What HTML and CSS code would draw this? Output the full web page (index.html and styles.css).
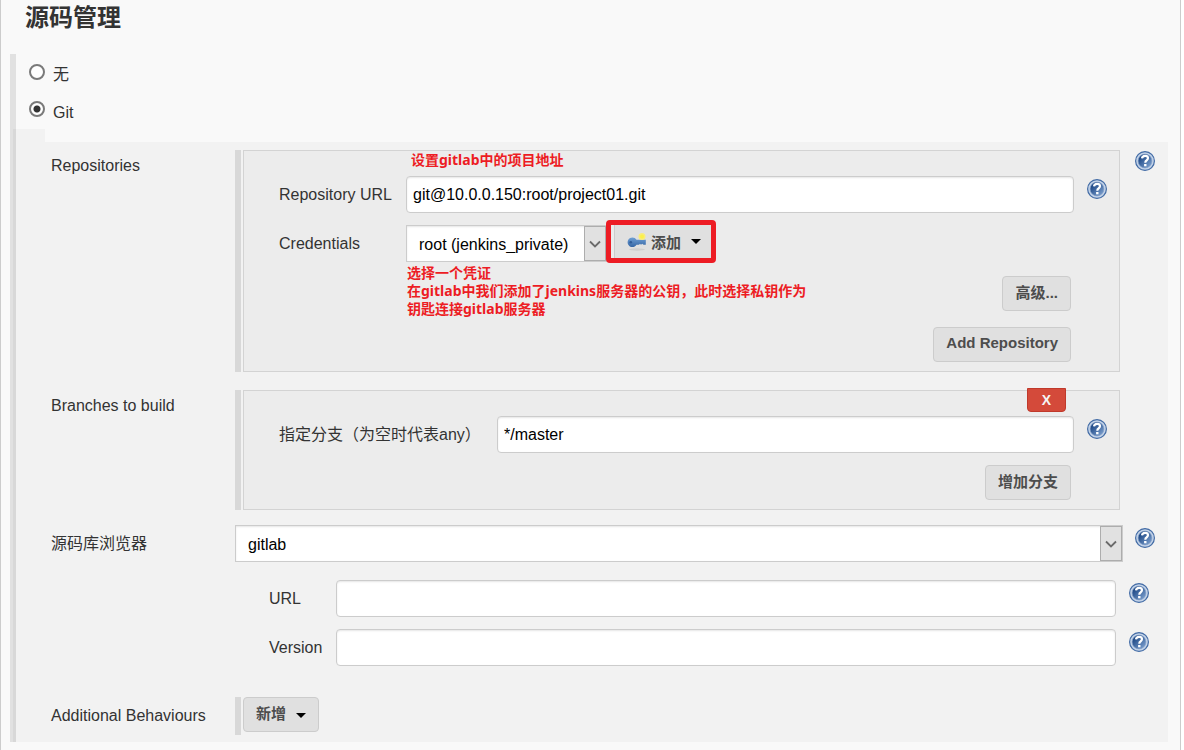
FILE: index.html
```html
<!DOCTYPE html>
<html lang="zh-CN">
<head>
  <meta charset="UTF-8">
  <meta name="viewport" content="width=device-width, initial-scale=1.0">
  <title>源码管理</title>
  <link rel="stylesheet" href="styles.css">
</head>
<body>
<!-- shared icons -->
<svg class="sprite" aria-hidden="true">
  <defs>
    <linearGradient id="help-fill" x1="0" y1="0" x2="1" y2="1">
      <stop offset="0.2" stop-color="#204a87"/>
      <stop offset="1" stop-color="#86a9d6"/>
    </linearGradient>
    <linearGradient id="key-fill" x1="0" y1="0" x2="0" y2="1">
      <stop offset="0" stop-color="#6f9fd4"/>
      <stop offset="1" stop-color="#3465a4"/>
    </linearGradient>
    <symbol id="help" viewBox="0 0 20 20">
      <circle cx="10" cy="10" r="9.4" fill="#c3d3e8" stroke="#426ba5" stroke-width="1.2"/>
      <circle cx="10" cy="10" r="6.9" fill="url(#help-fill)" stroke="#7f9cc6" stroke-width="0.6"/>
      <path d="M7 7.4C7.200 5.600 8.400 4.800 10.100 4.800c1.800 0 2.900.9 2.900 2.300 0 1.200-.7 1.800-1.500 2.400-.9.600-1.200 1-1.200 2.300" fill="none" stroke="#fff" stroke-width="2.200"/>
      <rect x="9.100" y="13" width="2.400" height="2.300" fill="#fff"/>
    </symbol>
    <symbol id="chevron" viewBox="0 0 12 8">
      <path d="M1 1.500l5 5 5-5" fill="none" stroke="#6a6a6a" stroke-width="1.800"/>
    </symbol>
    <symbol id="caret" viewBox="0 0 10 5">
      <path d="M0 0h10L5 5z" fill="#000"/>
    </symbol>
  </defs>
</svg>

<main class="page">
  <h2 class="title">源码管理</h2>

  <form class="scm">
    <div class="radio-row">
      <input type="radio" name="scm" id="scm-none">
      <label for="scm-none">无</label>
    </div>
    <div class="radio-row">
      <input type="radio" name="scm" id="scm-git" checked>
      <label for="scm-git">Git</label>
    </div>

    <div class="git">
      <div class="git-panel">

        <section class="row">
          <div class="row-label">Repositories</div>
          <div class="repeat">
            <div class="chunk">
              <p class="note note-top">设置gitlab中的项目地址</p>
              <div class="field repo-field">
                <label for="repo-url">Repository URL</label>
                <input class="text" type="text" id="repo-url" value="git@10.0.0.150:root/project01.git">
                <button type="button" class="help" aria-label="Help"><svg><use href="#help"/></svg></button>
              </div>
              <div class="field repo-field">
                <label for="credentials">Credentials</label>
                <div class="cred">
                  <div class="select cred-select">
                    <select id="credentials"><option>root (jenkins_private)</option></select>
                    <span class="arrow"><svg><use href="#chevron"/></svg></span>
                  </div>
                  <div class="highlight">
                    <button type="button" class="add-btn">
                      <svg class="key" viewBox="0 0 20 18">
                        <ellipse cx="10" cy="16.500" rx="8" ry="1.200" fill="#cfcfcf"/>
                        <path d="M5.500 4.500a4.800 4.800 0 1 0 4 7.300H12l1-1 1 1 1.200-1 1.300 1h2.300V6.800H9.500a4.800 4.800 0 0 0-4-2.300z" fill="url(#key-fill)"/>
                        <circle cx="3.800" cy="9.200" r="1.300" fill="#2f5c99"/>
                        <circle cx="15" cy="3.600" r="3.500" fill="#f9ec7a"/>
                        <circle cx="15" cy="3.600" r="2" fill="#fbf04a"/>
                      </svg>
                      添加
                      <svg class="caret"><use href="#caret"/></svg>
                    </button>
                  </div>
                </div>
              </div>
              <div class="repo-foot">
                <p class="note">选择一个凭证<br>在gitlab中我们添加了jenkins服务器的公钥，此时选择私钥作为<br>钥匙连接gitlab服务器</p>
                <div class="actions">
                  <button type="button" class="btn">高级...</button>
                  <button type="button" class="btn">Add Repository</button>
                </div>
              </div>
            </div>
          </div>
          <button type="button" class="help" aria-label="Help"><svg><use href="#help"/></svg></button>
        </section>

        <section class="row">
          <div class="row-label">Branches to build</div>
          <div class="repeat">
            <div class="chunk branch">
              <button type="button" class="delete">X</button>
              <div class="field branch-field">
                <label for="branch">指定分支（为空时代表any）</label>
                <input class="text" type="text" id="branch" value="*/master">
                <button type="button" class="help" aria-label="Help"><svg><use href="#help"/></svg></button>
              </div>
              <div class="actions branch-actions">
                <button type="button" class="btn">增加分支</button>
              </div>
            </div>
          </div>
        </section>

        <section class="row browser-row">
          <label class="row-label" for="browser">源码库浏览器</label>
          <div class="select">
            <select id="browser"><option>gitlab</option></select>
            <span class="arrow"><svg><use href="#chevron"/></svg></span>
          </div>
          <button type="button" class="help" aria-label="Help"><svg><use href="#help"/></svg></button>
        </section>

        <div class="browser-fields">
          <div class="field browser-field">
            <label for="browser-url">URL</label>
            <input class="text" type="text" id="browser-url">
            <button type="button" class="help" aria-label="Help"><svg><use href="#help"/></svg></button>
          </div>
          <div class="field browser-field">
            <label for="browser-version">Version</label>
            <input class="text" type="text" id="browser-version">
            <button type="button" class="help" aria-label="Help"><svg><use href="#help"/></svg></button>
          </div>
        </div>

        <section class="row behaviours-row">
          <div class="row-label">Additional Behaviours</div>
          <div class="repeat">
            <button type="button" class="btn">新增 <svg class="caret"><use href="#caret"/></svg></button>
          </div>
        </section>

      </div>
    </div>
  </form>
</main>
</body>
</html>
```
FILE: styles.css
```css
* {
  box-sizing: border-box;
}

body {
  margin: 0;
  background: #fff;
  color: #333;
  font-family: "Liberation Sans", "Noto Sans CJK SC", sans-serif;
  font-size: 16px;
  line-height: 20px;
}

button,
input,
select {
  margin: 0;
  font-family: inherit;
}

.sprite {
  position: absolute;
  width: 0;
  height: 0;
}

.page {
  min-height: 100vh;
  margin-right: 3px;
  border: 1px solid #ccc;
  border-width: 0 1px;
  background: #f9f9f9;
}

.title {
  margin: 0;
  padding: 0 24px 18px;
  font-size: 24px;
  line-height: 36px;
}

/* Radio list */
.scm {
  margin: 0 12px 0 9px;
  border-left: 6px solid #e1e1e1;
}

.radio-row {
  display: flex;
  align-items: center;
  gap: 8px;
  height: 38px;
  padding-left: 13px;
}

.radio-row + .radio-row {
  height: 37px;
}

.radio-row input {
  appearance: none;
  width: 16px;
  height: 16px;
  margin-bottom: 3px;
  border: 2px solid #7a7a7a;
  border-radius: 50%;
  background: #fff;
}

.radio-row input:checked {
  background: radial-gradient(circle, #333 0 3px, #fff 4px);
}

.radio-row label {
  padding-top: 4px;
}

/* Git options, with the small tab under the radio button */
.git {
  margin-left: -3px;
  border-left: 3px solid #d8d8d8;
}

.git::before {
  content: "";
  display: block;
  width: 29px;
  height: 13px;
  background: #f2f2f2;
}

.git-panel {
  padding: 8px 13px 7px 35px;
  background: #f2f2f2;
}

.row {
  display: grid;
  grid-template-columns: 184px 1fr 20px;
  margin-bottom: 18px;
}

.row > .help {
  margin-top: 1px;
}

.row-label {
  padding-top: 6px;
}

.repeat {
  margin-right: 15px;
  padding-left: 2px;
  border-left: 6px solid #d8d8d8;
}

.chunk {
  position: relative;
  border: 1px solid #d3d3d3;
  background: #ececec;
  padding: 0 12px 9px 35px;
}

/* Fields */
.field {
  display: grid;
  align-items: start;
  margin-bottom: 12px;
}

.field label {
  padding-top: 9px;
}

.field .help {
  margin: 3px 0 0 13px;
}

.repo-field {
  grid-template-columns: 127px 1fr 33px;
}

.branch-field {
  grid-template-columns: 218px 1fr 33px;
}

.browser-field {
  grid-template-columns: 67px 1fr 33px;
}

.text,
.select select {
  width: 100%;
  height: 37px;
  border: 1px solid #ccc;
  background: #fff;
  box-shadow: inset 0 1px 2px rgba(0, 0, 0, 0.1);
  color: #000;
  font-size: 16px;
}

.text {
  padding: 0 6px;
  border-radius: 4px;
}

.select {
  position: relative;
  margin-right: 12px;
}

.select select {
  appearance: none;
  display: block;
  padding: 2px 34px 0 12px;
  border-radius: 0;
}

.arrow {
  position: absolute;
  top: 1px;
  right: 1px;
  bottom: 1px;
  display: flex;
  align-items: center;
  justify-content: center;
  width: 22px;
  border: 1px solid #adadad;
  background: #e1e1e1;
  pointer-events: none;
}

.arrow svg {
  width: 12px;
  height: 8px;
}

.help {
  width: 20px;
  height: 20px;
  padding: 0;
  border: 0;
  background: none;
}

.help svg {
  display: block;
  width: 20px;
  height: 20px;
}

/* Buttons */
.btn {
  height: 35px;
  padding: 0 12px 4px;
  border: 1px solid #ccc;
  border-radius: 4px;
  background: #e0e0e0;
  color: #4d4d4d;
  font-size: 15px;
  font-weight: bold;
}

.caret {
  width: 10px;
  height: 5px;
  margin-left: 6px;
  vertical-align: middle;
}

.cred {
  display: flex;
  height: 37px;
}

.cred-select {
  width: 201px;
  margin: 0;
}

.highlight {
  height: 43px;
  margin: -5px 0 0 -1px;
  padding-left: 3px;
  border: 5px solid #ed1c24;
  border-radius: 4px;
  z-index: 1;
}

.add-btn {
  display: flex;
  align-items: center;
  gap: 4px;
  width: 97px;
  height: 33px;
  padding: 0 10px 0 12px;
  border: 0;
  border-left: 1px solid #ccc;
  background: #e0e0e0;
  color: #4d4d4d;
  font-size: 15px;
  font-weight: bold;
}

.key {
  width: 20px;
  height: 18px;
}

.delete {
  position: absolute;
  top: -3px;
  right: 53px;
  width: 39px;
  height: 24px;
  padding: 0;
  border: 1px solid #c0392b;
  border-radius: 0 0 4px 4px;
  background: #d44a3a;
  color: #f5f5f5;
  font-size: 14px;
  font-weight: bold;
}

/* Red notes */
.note {
  margin: 0;
  color: #ed1c24;
  font-family: "Noto Sans", "Noto Sans CJK SC", sans-serif;
  font-size: 14px;
  font-weight: bold;
  line-height: 18px;
}

.note-top {
  height: 25px;
  padding-left: 132px;
}

.repo-foot {
  display: flex;
  justify-content: space-between;
  margin-top: -10px;
  padding-left: 128px;
}

.actions {
  display: flex;
  flex-direction: column;
  align-items: flex-end;
  gap: 16px;
  padding: 12px 36px 0 0;
}

.branch {
  padding-top: 25px;
}

.branch-actions {
  padding-top: 0;
}

/* Repository browser */
.browser-row {
  margin-top: -3px;
}

.browser-row > .help {
  margin-top: 3px;
}

.browser-row .row-label,
.behaviours-row .row-label {
  padding-top: 9px;
}

.browser-fields {
  margin: 0 6px 31px 218px;
}

.browser-field:last-child {
  margin-bottom: 0;
}

.behaviours-row {
  height: 38px;
  margin-bottom: 0;
}
```
